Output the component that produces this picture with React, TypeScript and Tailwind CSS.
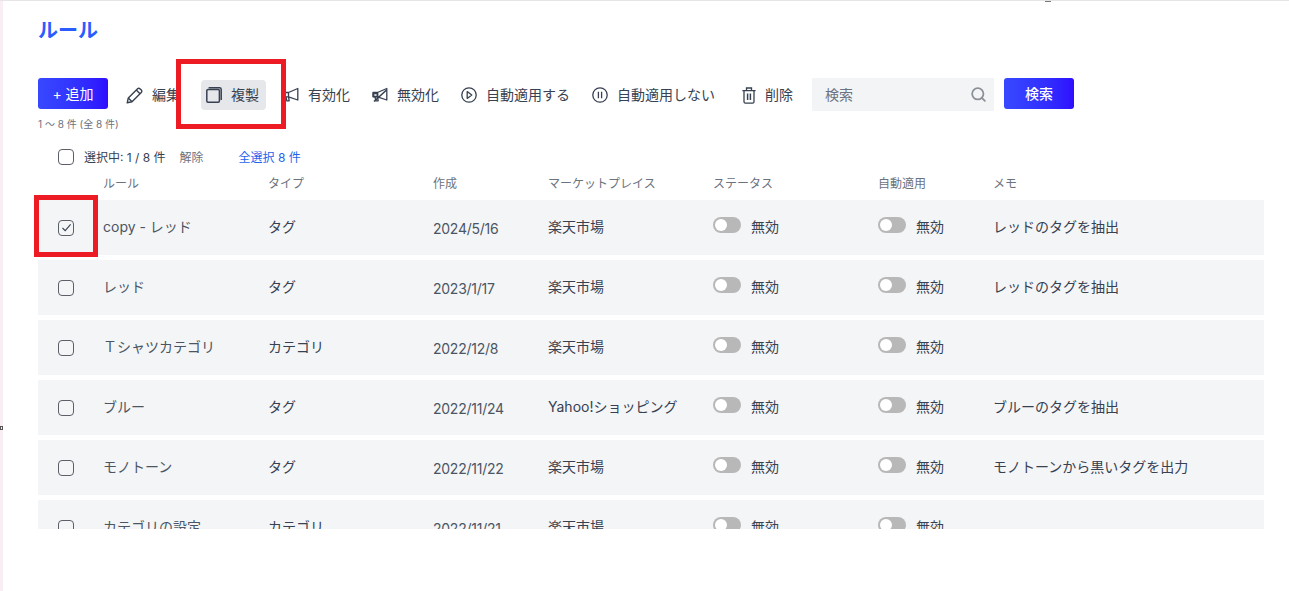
import { Search } from "lucide-react";

const fontStack = "font-['Inter','Noto_Sans_CJK_JP',sans-serif]";

type Rule = {
  name: string;
  type: string;
  created: string;
  market: string;
  memo: string;
  checked?: boolean;
};

const rules: Rule[] = [
  { name: "copy - レッド", type: "タグ", created: "2024/5/16", market: "楽天市場", memo: "レッドのタグを抽出", checked: true },
  { name: "レッド", type: "タグ", created: "2023/1/17", market: "楽天市場", memo: "レッドのタグを抽出" },
  { name: "Ｔシャツカテゴリ", type: "カテゴリ", created: "2022/12/8", market: "楽天市場", memo: "" },
  { name: "ブルー", type: "タグ", created: "2022/11/24", market: "Yahoo!ショッピング", memo: "ブルーのタグを抽出" },
  { name: "モノトーン", type: "タグ", created: "2022/11/22", market: "楽天市場", memo: "モノトーンから黒いタグを出力" },
  { name: "カテゴリの設定", type: "カテゴリ", created: "2022/11/21", market: "楽天市場", memo: "" },
];

function PencilIcon() {
  return (
    <svg width="17" height="17" viewBox="0 0 17 17" fill="none" stroke="currentColor" strokeWidth="1.4" strokeLinejoin="round">
      <path d="M1.2 15.8 2.3 11 11.6 1.7a1.6 1.6 0 0 1 2.3 0l1.4 1.4a1.6 1.6 0 0 1 0 2.3L6 14.7z" />
      <path d="M2.3 11 6 14.7M10.3 3l3.7 3.7" />
    </svg>
  );
}

function CopyIcon() {
  return (
    <svg width="16" height="16" viewBox="0 0 16 16" fill="none" stroke="currentColor" strokeWidth="1.5">
      <rect x="0.8" y="2.6" width="12.6" height="12.6" rx="1.2" />
      <path d="M2.6.8h10.9a1.7 1.7 0 0 1 1.7 1.7V13" />
    </svg>
  );
}

function HornIcon({ off }: { off?: boolean }) {
  return (
    <svg width="16" height="16" viewBox="0 0 16 16" fill="none" stroke="currentColor" strokeWidth="1.3" strokeLinejoin="round">
      <path d="M1 5.5h4.5L14.8 1.5v11.5L5.5 9.8H1z" />
      <path d="M5.5 5.5v4.3M3 9.8l.8 4h2.4l-.7-4" />
      {off ? <path d="M1.5 6.5h4v3h-4zM2 14.5 14.5 3" strokeWidth="1.6" /> : null}
    </svg>
  );
}

function PlayIcon() {
  return (
    <svg width="16" height="16" viewBox="0 0 16 16" fill="none" stroke="currentColor" strokeWidth="1.3" strokeLinejoin="round">
      <circle cx="8" cy="8" r="7.2" />
      <path d="M6.2 4.6 10.8 8l-4.6 3.4z" />
    </svg>
  );
}

function PauseIcon() {
  return (
    <svg width="16" height="16" viewBox="0 0 16 16" fill="none" stroke="currentColor" strokeWidth="1.3">
      <circle cx="8" cy="8" r="7.2" />
      <path d="M6.4 4.8v6.4M9.6 4.8v6.4" />
    </svg>
  );
}

function TrashIcon() {
  return (
    <svg width="14" height="17" viewBox="0 0 14 17" fill="none" stroke="currentColor" strokeWidth="1.3">
      <path d="M2 4v10.8A1.4 1.4 0 0 0 3.4 16.2h7.2A1.4 1.4 0 0 0 12 14.8V4" />
      <path d="M.4 3.6h13.2M4.5 3.6V1h5v2.6" />
      <path d="M5.6 6.5v6.5M8.4 6.5v6.5" strokeWidth="1.5" />
    </svg>
  );
}

function Checkbox({ checked }: { checked?: boolean }) {
  return (
    <span className="flex h-4 w-4 items-center justify-center rounded-[4px] border-[1.5px] border-[#5b5f68]">
      {checked ? (
        <svg width="11" height="11" viewBox="0 0 11 11" fill="none" stroke="#374151" strokeWidth="1.1">
          <path d="M1.5 6 4.2 8.7 9.6 2.4" />
        </svg>
      ) : null}
    </span>
  );
}

function Toggle() {
  return (
    <span className="mb-[2px] flex items-center gap-[10px]">
      <span className="mb-[4px] flex h-4 w-[28px] items-center rounded-full bg-[#b8b8b8] pl-[2px]">
        <span className="h-3 w-3 rounded-full bg-white" />
      </span>
      <span>無効</span>
    </span>
  );
}

function ToolItem({ icon, label, className }: { icon: React.ReactNode; label: string; className: string }) {
  return (
    <button className={`flex h-[30px] items-center rounded pl-[5px] text-sm text-[#374151] ${className}`}>
      {icon}
      <span className="ml-[9px]">{label}</span>
    </button>
  );
}

export default function App() {
  return (
    <div className={`relative h-[591px] w-[1289px] overflow-hidden border-t border-[#e5e5e5] bg-white ${fontStack}`}>
      <div className="h-full border-l-[3px] border-[#f8eef3] pl-[35px] pr-[25px]">
        <h1 className="pt-[15px] text-[20px] leading-[30px] font-bold text-[#2a5cff]">ルール</h1>

        <div className="mt-[32px] flex items-start">
          <button className="h-[31px] w-[70px] rounded-[3px] bg-gradient-to-r from-[#3848ff] to-[#2f0cff] text-sm text-white">
            + 追加
          </button>
          <div className="ml-[13px] flex items-center pt-[2px]">
            <ToolItem icon={<PencilIcon />} label="編集" className="pr-[4px]" />
            <ToolItem icon={<CopyIcon />} label="複製" className="ml-[17px] bg-[#e5e7eb] pr-[7px]" />
            <ToolItem icon={<HornIcon />} label="有効化" className="ml-[12px] pr-[5px]" />
            <ToolItem icon={<HornIcon off />} label="無効化" className="ml-[12px] pr-[5px]" />
            <ToolItem icon={<PlayIcon />} label="自動適用する" className="ml-[12px] pr-[5px]" />
            <ToolItem icon={<PauseIcon />} label="自動適用しない" className="ml-[12px] pr-[5px]" />
            <ToolItem icon={<TrashIcon />} label="削除" className="ml-[17px] pr-[5px]" />
          </div>
          <div className="ml-[14px] flex h-[33px] w-[182px] items-center justify-between bg-[#f3f4f6] pl-[13px] pr-[7px] text-sm text-[#6b7280]">
            <span>検索</span>
            <Search size={17} strokeWidth={2.5} className="text-[#8b8f96]" />
          </div>
          <button className="ml-[10px] h-[31px] w-[70px] rounded-[3px] bg-gradient-to-r from-[#3848ff] to-[#2f0cff] text-sm font-medium text-white">
            検索
          </button>
        </div>

        <p className="mt-[5px] text-[10px] leading-[16px] text-[#6b7280]">1 〜 8 件 (全 8 件)</p>

        <div className="mt-[17px] flex h-[17px] items-center pl-[20px] text-xs text-[#374151]">
          <span className="mb-[2px]">
            <Checkbox />
          </span>
          <span className="ml-[10px]">選択中: 1 / 8 件</span>
          <span className="ml-[14px] text-[#6b7280]">解除</span>
          <span className="ml-[35px] text-[#2563eb]">全選択 8 件</span>
        </div>

        <div className="mt-[5px] grid h-[26px] grid-cols-[65px_165px_165px_115px_165px_165px_115px_1fr] items-center text-xs text-[#6b7280]">
          <span />
          <span>ルール</span>
          <span>タイプ</span>
          <span>作成</span>
          <span>マーケットプレイス</span>
          <span>ステータス</span>
          <span>自動適用</span>
          <span>メモ</span>
        </div>

        <div className="mt-[3px] flex h-[329px] flex-col gap-[5px] overflow-hidden">
          {rules.map((rule) => (
            <div
              key={rule.name}
              className="grid h-[55px] shrink-0 grid-cols-[65px_165px_165px_115px_165px_165px_115px_1fr] items-center bg-[#f4f5f7] text-sm text-[#374151]"
            >
              <span className="pl-[20px]">
                <Checkbox checked={rule.checked} />
              </span>
              <span className="mb-[2px] text-[#4b5563]">{rule.name}</span>
              <span className="mb-[2px]">{rule.type}</span>
              <span className="mt-[2px] tracking-[-0.25px] text-[#4b5563]">{rule.created}</span>
              <span className="mb-[2px]">{rule.market}</span>
              <Toggle />
              <Toggle />
              <span className="mb-[2px]">{rule.memo}</span>
            </div>
          ))}
        </div>
      </div>

      <div className="absolute left-[176px] top-[58px] h-[70px] w-[110px] border-[5px] border-[#ed1c24]" />
      <div className="absolute left-[34px] top-[194px] h-[62px] w-[64px] border-[5px] border-[#ed1c24]" />
      <div className="absolute left-0 top-[425px] h-[4px] w-[3px] border border-[#555]" />
      <div className="absolute left-[1045px] top-[-1px] h-[2px] w-[6px] bg-[#777]" />
    </div>
  );
}
